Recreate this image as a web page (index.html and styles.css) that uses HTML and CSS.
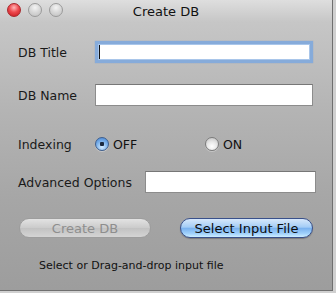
FILE: index.html
```html
<!DOCTYPE html>
<html lang="en">
<head>
  <meta charset="UTF-8">
  <title>Create DB</title>
  <link rel="stylesheet" href="styles.css">
</head>
<body>
  <div class="window">
    <div class="titlebar">
      <div class="lights">
        <span class="light close"></span>
        <span class="light"></span>
        <span class="light"></span>
      </div>
      <div class="title">Create DB</div>
    </div>

    <div class="content">
      <div class="row row-title">
        <label class="label label-short" for="dbTitle">DB Title</label>
        <input class="field focused" type="text" id="dbTitle">
      </div>

      <div class="row row-name">
        <label class="label label-short" for="dbName">DB Name</label>
        <input class="field" type="text" id="dbName">
      </div>

      <div class="row row-indexing">
        <span class="label label-short">Indexing</span>
        <span class="radio-opt radio-off"><span class="radio checked"></span>OFF</span>
        <span class="radio-opt"><span class="radio"></span>ON</span>
      </div>

      <div class="row row-advanced">
        <label class="label label-long" for="advanced">Advanced Options</label>
        <input class="field field-short" type="text" id="advanced">
      </div>

      <div class="row row-buttons">
        <button class="btn btn-disabled" disabled>Create DB</button>
        <button class="btn btn-aqua">Select Input File</button>
      </div>

      <p class="hint">Select or Drag-and-drop input file</p>
    </div>
  </div>
</body>
</html>
```

FILE: styles.css
```css
:root {
  --text-color: #111;
  --font-family: 'DejaVu Sans', 'Liberation Sans', sans-serif;
}
body {
  margin: 0;
  background-color: #d0d0d0;
  font-family: var(--font-family);
  color: var(--text-color);
}
.window {
  width: 332px;
  height: 290px;
  border-right: 1px solid #6f6f6f;
  border-bottom: 1px solid #6f6f6f;
  background: linear-gradient(#dedede 0, #c6c6c6 22px, #b4b4b4 110px, #a6a6a6 200px, #9d9d9d 100%);
}
.titlebar {
  height: 22px;
  display: flex;
  align-items: center;
  position: relative;
}
.lights {
  display: flex;
  gap: 7px;
  padding-left: 7px;
  margin-top: -2px;
}
.light {
  box-sizing: border-box;
  width: 14px;
  height: 14px;
  border-radius: 50%;
  border: 1px solid #9a9a9a;
  background: radial-gradient(circle at 50% 30%, #f4f4f4 0, #d6d6d6 50%, #c0c0c0 100%);
}
.light.close {
  border-color: #a8272b;
  background: radial-gradient(circle at 50% 30%, #ffb8b8 0, #ee4a4f 45%, #c4161c 100%);
}
.title {
  position: absolute;
  left: 0;
  right: 0;
  text-align: center;
  font-size: 13px;
  color: #111;
  pointer-events: none;
}
.content {
  padding-left: 18px;
}
.row {
  display: flex;
  align-items: center;
  height: 22px;
}
.row-title {
  margin-top: 19px;
}
.row-name {
  margin-top: 21px;
}
.row-indexing {
  margin-top: 30px;
  height: 16px;
}
.row-advanced {
  margin-top: 19px;
}
.row-buttons {
  margin-top: 25px;
  height: 20px;
}
.label {
  font-size: 12.5px;
  color: #1a1a1a;
}
.label-short {
  width: 77px;
  flex: none;
}
.label-long {
  width: 127px;
  flex: none;
}
.field {
  box-sizing: border-box;
  width: 218px;
  height: 22px;
  margin: 0;
  padding: 0 3px;
  border: 1px solid #8c8c8c;
  border-top-color: #777;
  background-color: #fff;
  font-family: var(--font-family);
  font-size: 12px;
  outline: none;
}
.field.focused {
  border: 3px solid #86abda;
  box-shadow: 0 0 1px rgba(90, 140, 210, 0.6), inset 0 0 0 1px #a9c6ea;
}
.row-title .field {
  background-image: linear-gradient(#111, #111);
  background-size: 1px 14px;
  background-position: 1px 1px;
  background-repeat: no-repeat;
}
.field-short {
  width: 171px;
}
.radio-opt {
  display: flex;
  align-items: center;
  gap: 4px;
  font-size: 12.5px;
}
.radio-off {
  width: 110px;
}
.radio {
  box-sizing: border-box;
  width: 14px;
  height: 14px;
  border-radius: 50%;
  border: 1px solid #7c7c7c;
  background: radial-gradient(circle at 50% 70%, #ffffff 0, #e8e8e8 45%, #bdbdbd 100%);
  box-shadow: 0 1px 0 rgba(255, 255, 255, 0.3);
}
.radio.checked {
  border-color: #3f5f8e;
  background:
    radial-gradient(circle, #1c2a40 0, #1c2a40 2px, transparent 2.5px),
    radial-gradient(circle at 50% 75%, #d6ecff 0, #7fb4ec 50%, #3f7fd0 100%);
}
.btn {
  box-sizing: border-box;
  height: 20px;
  padding: 0;
  border-radius: 10px;
  font-family: var(--font-family);
  font-size: 13px;
}
.btn-disabled {
  width: 132px;
  margin-left: 1px;
  border: 1px solid #9d9d9d;
  background: linear-gradient(#e2e2e2, #cbcbcb 50%, #c2c2c2 51%, #d4d4d4);
  color: #8e8e8e;
}
.btn-aqua {
  width: 133px;
  margin-left: 29px;
  border: 1px solid #39508a;
  background: linear-gradient(#d7e8fb 0, #a4cdf6 45%, #7ab2ef 52%, #9fd0fb 80%, #cdeeff 100%);
  color: #0c0c0c;
  box-shadow: 0 1px 1px rgba(0, 0, 0, 0.25);
}
.hint {
  margin: 21px 0 0 21px;
  font-size: 11px;
  line-height: 14px;
  color: #111;
}
```
